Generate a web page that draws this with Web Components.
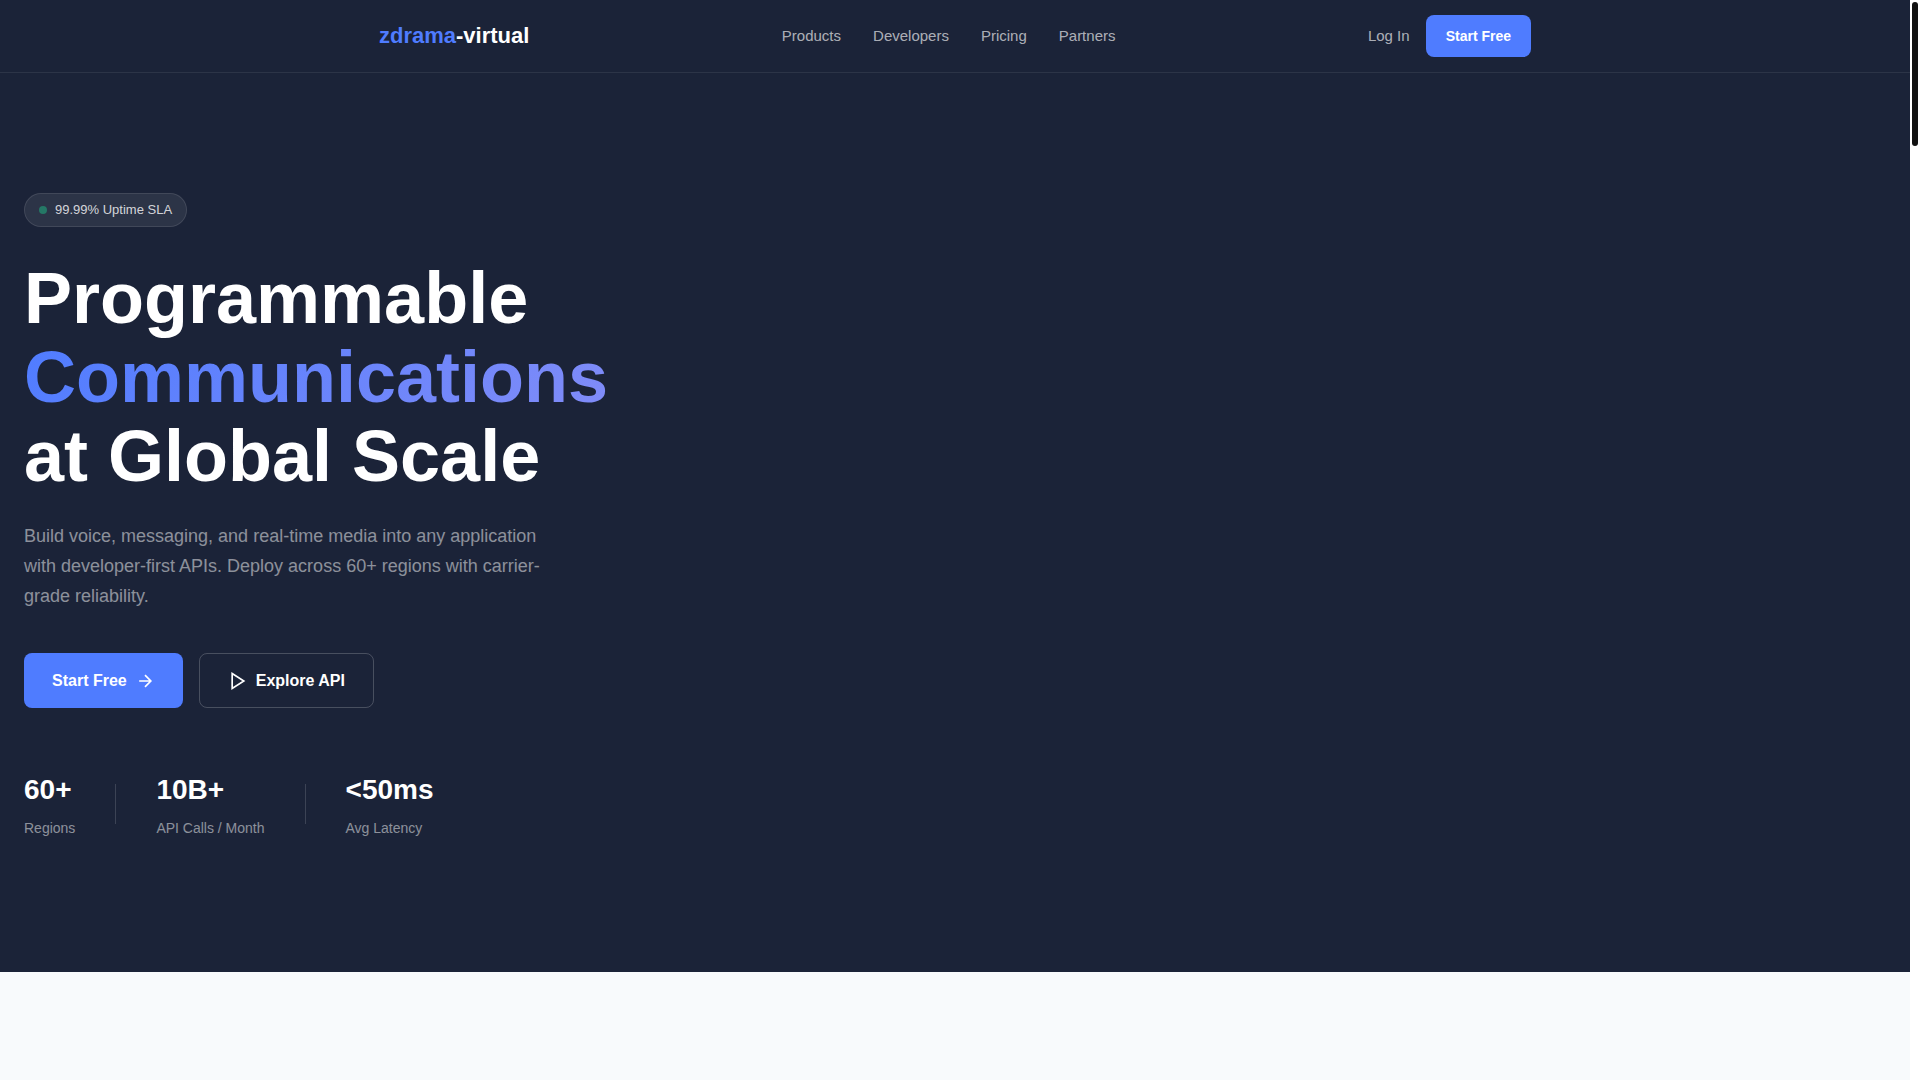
<!DOCTYPE html>
<html lang="en">
<head>
<meta charset="utf-8">
<meta name="viewport" content="width=device-width, initial-scale=1">
<title>zdrama-virtual</title>
<style>
  :root {
    --ink: #1b2338;
    --accent: #4f7cff;
    --accent-end: #818cf8;
    --surface: #f8fafc;
    --line: rgba(255, 255, 255, 0.08);
  }
  html, body { margin: 0; height: 100%; }
  body {
    overflow: hidden;
    background: #fff;
    color: #fff;
    font: 16px/24px "Liberation Sans", Arial, sans-serif;
  }
</style>
</head>
<body>
<zv-app>
  <zv-header>
    <zv-logo></zv-logo>
    <zv-nav-link slot="nav">Products</zv-nav-link>
    <zv-nav-link slot="nav">Developers</zv-nav-link>
    <zv-nav-link slot="nav">Pricing</zv-nav-link>
    <zv-nav-link slot="nav">Partners</zv-nav-link>
    <zv-nav-link slot="actions">Log In</zv-nav-link>
    <zv-button slot="actions" size="small">Start Free</zv-button>
  </zv-header>
  <zv-hero>
    <zv-badge slot="badge">99.99% Uptime SLA</zv-badge>
    <span slot="title">Programmable</span>
    <span slot="highlight">Communications</span>
    <span slot="title-end">at Global Scale</span>
    <span slot="lead">Build voice, messaging, and real-time media into any application with developer-first APIs. Deploy across 60+ regions with carrier-grade reliability.</span>
    <zv-button slot="cta">Start Free
      <svg slot="after" width="20" height="20" viewBox="0 0 24 24" fill="none" stroke="currentColor" stroke-width="2" aria-hidden="true"><path d="M5 12h14M12 5l7 7-7 7"/></svg>
    </zv-button>
    <zv-button slot="cta" kind="outline">
      <svg slot="before" width="20" height="20" viewBox="0 0 24 24" fill="none" stroke="currentColor" stroke-width="2" aria-hidden="true"><polygon points="5 3 19 12 5 21 5 3"/></svg>
      Explore API</zv-button>
    <zv-stat slot="stats" value="60+">Regions</zv-stat>
    <zv-stat slot="stats" value="10B+">API Calls / Month</zv-stat>
    <zv-stat slot="stats" value="&lt;50ms">Avg Latency</zv-stat>
  </zv-hero>
</zv-app>
<script>
  const define = (name, html, setup) => {
    const template = document.createElement('template');
    template.innerHTML = html;
    customElements.define(name, class extends HTMLElement {
      constructor() {
        super();
        this.attachShadow({ mode: 'open' }).append(template.content.cloneNode(true));
      }
      connectedCallback() {
        if (setup) setup(this, this.shadowRoot);
      }
    });
  };

  define('zv-scrollbar', `
    <style>
      :host { display: block; flex: none; box-sizing: border-box; width: 10px; padding: 2px; background: #fff; }
      div { height: 144px; border-radius: 3px; background: #111; }
    </style>
    <div></div>`);

  define('zv-app', `
    <style>
      :host { display: flex; min-height: 100vh; }
      .page { flex: 1; min-width: 0; background: var(--surface); }
      .top { display: flex; flex-direction: column; min-height: 90vh; background: var(--ink); }
    </style>
    <div class="page"><div class="top"><slot></slot></div></div>
    <zv-scrollbar></zv-scrollbar>`);

  define('zv-header', `
    <style>
      :host { display: block; border-bottom: 1px solid var(--line); }
      .bar {
        display: flex; align-items: center; justify-content: space-between;
        box-sizing: border-box; max-width: 1200px; min-height: 72px;
        margin: 0 auto; padding: 0 24px;
      }
      nav { display: flex; gap: 32px; }
      .actions { display: flex; align-items: center; gap: 16px; }
    </style>
    <header class="bar">
      <slot></slot>
      <nav><slot name="nav"></slot></nav>
      <div class="actions"><slot name="actions"></slot></div>
    </header>`);

  define('zv-logo', `
    <style>
      :host { display: block; }
      a { display: block; color: #fff; font-size: 22px; font-weight: 700; line-height: 38px; text-decoration: none; }
      span { color: var(--accent); }
    </style>
    <a href="#"><span>zdrama</span>-virtual</a>`);

  define('zv-nav-link', `
    <style>
      :host { display: block; }
      a { color: rgba(255, 255, 255, 0.65); font-size: 15px; text-decoration: none; }
    </style>
    <a href="#"><slot></slot></a>`);

  define('zv-button', `
    <style>
      :host { display: block; }
      button {
        display: flex; align-items: center; gap: 8px; box-sizing: border-box;
        padding: 14px 28px; border: 0; border-radius: 8px;
        background: var(--accent); color: #fff;
        font: 700 16px/27px "Liberation Sans", Arial, sans-serif; cursor: pointer;
      }
      :host([size="small"]) button { padding: 10px 20px; font-size: 14px; line-height: 22px; }
      :host([kind="outline"]) button { padding: 13px 28px; border: 1px solid rgba(255, 255, 255, 0.2); background: transparent; }
    </style>
    <button type="button"><slot name="before"></slot><span><slot></slot></span><slot name="after"></slot></button>`);

  define('zv-badge', `
    <style>
      :host {
        display: flex; align-items: center; gap: 8px;
        padding: 5px 14px; border: 1px solid rgba(255, 255, 255, 0.1); border-radius: 20px;
        background: rgba(255, 255, 255, 0.08); color: rgba(255, 255, 255, 0.8);
        font-size: 13px; line-height: 22px;
      }
      i { width: 8px; height: 8px; border-radius: 50%; background: #257866; }
    </style>
    <i></i><slot></slot>`);

  define('zv-stat', `
    <style>
      :host { display: flex; align-items: center; gap: 40px; }
      :host(:not(:last-of-type))::after { content: ""; width: 1px; height: 40px; background: rgba(255, 255, 255, 0.15); }
      dl { display: flex; flex-direction: column-reverse; gap: 4px; margin: 0; }
      dd { margin: 0; font-size: 28px; font-weight: 700; line-height: 44px; }
      dt { color: rgba(255, 255, 255, 0.5); font-size: 14px; line-height: 24px; }
    </style>
    <dl><dt><slot></slot></dt><dd></dd></dl>`,
    (host, root) => { root.querySelector('dd').textContent = host.getAttribute('value'); });

  define('zv-hero', `
    <style>
      :host { display: block; padding: 120px 24px; }
      .badge { display: flex; margin-bottom: 32px; }
      h1 { margin: 0 0 25px; font-size: 72px; line-height: 79px; font-weight: 700; }
      h1 div { width: fit-content; }
      .highlight {
        background: linear-gradient(135deg, var(--accent), var(--accent-end));
        -webkit-background-clip: text; background-clip: text; color: transparent;
      }
      p { max-width: 520px; margin: 0 0 42px; color: rgba(255, 255, 255, 0.5); font-size: 18px; line-height: 30px; }
      .cta { display: flex; flex-wrap: wrap; gap: 16px; margin-bottom: 60px; }
      .stats { display: flex; flex-wrap: wrap; gap: 40px; }
    </style>
    <div class="badge"><slot name="badge"></slot></div>
    <h1>
      <div><slot name="title"></slot></div>
      <div class="highlight"><slot name="highlight"></slot></div>
      <div><slot name="title-end"></slot></div>
    </h1>
    <p><slot name="lead"></slot></p>
    <div class="cta"><slot name="cta"></slot></div>
    <div class="stats"><slot name="stats"></slot></div>`);
</script>
</body>
</html>
